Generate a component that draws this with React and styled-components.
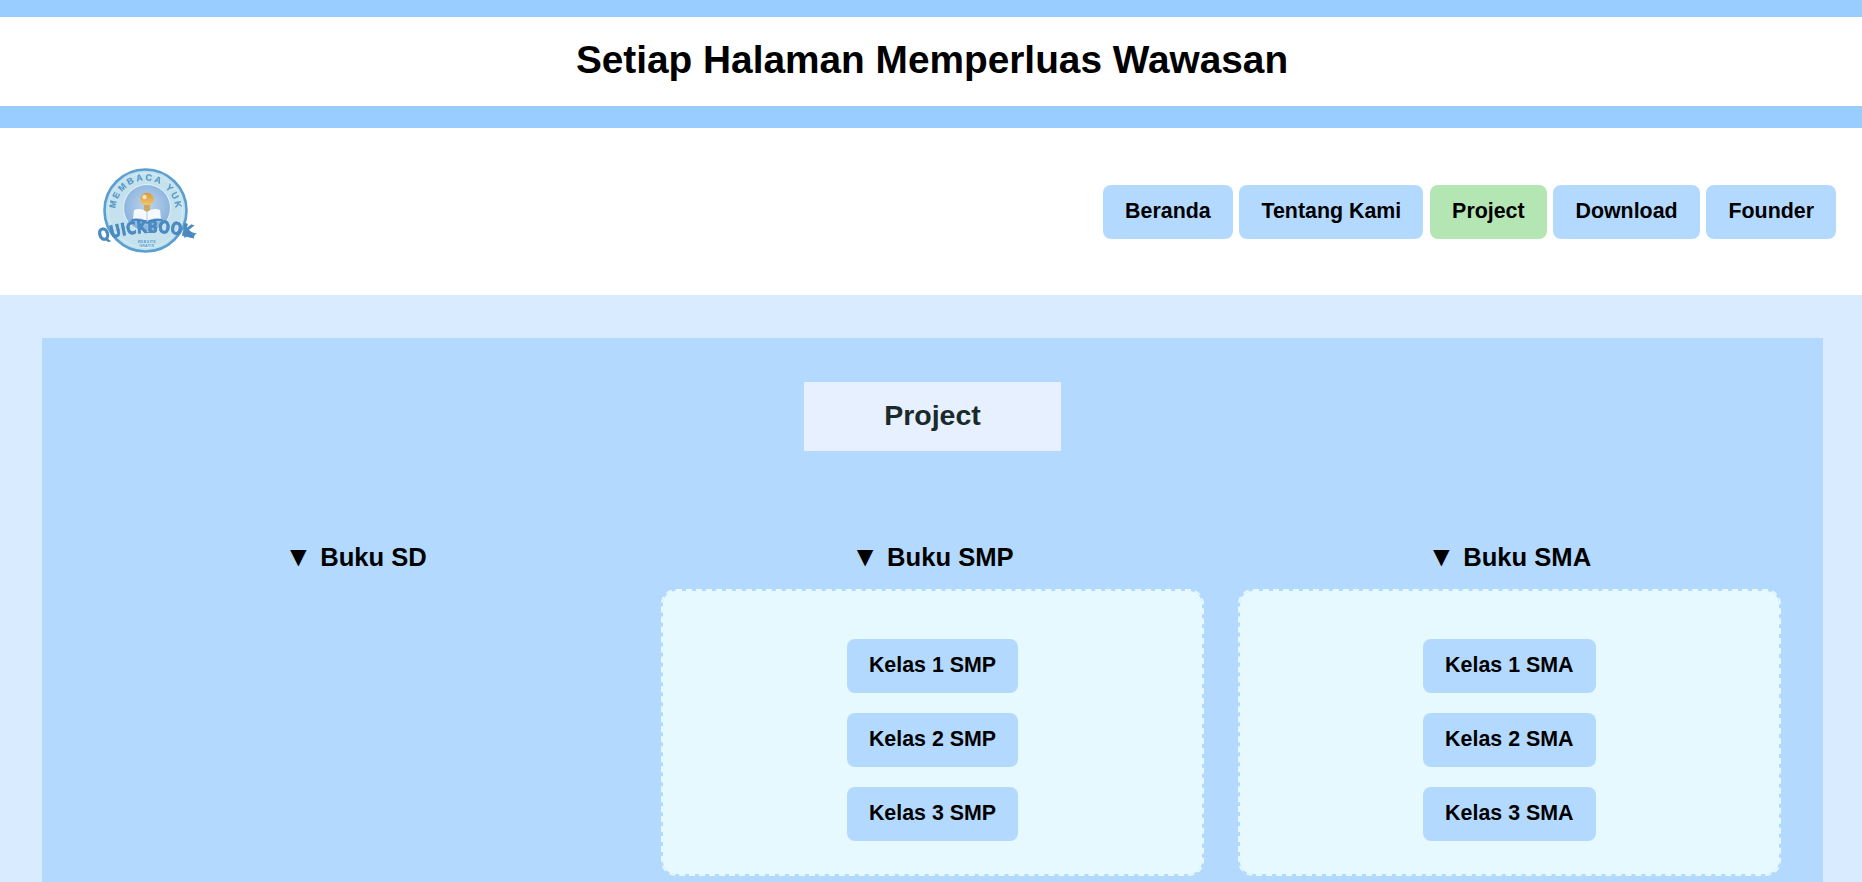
import React from "react";
import styled, { createGlobalStyle } from "styled-components";

const Global = createGlobalStyle`
  html, body { margin: 0; padding: 0; height: 882px; overflow: hidden; }
  body { font-family: "Liberation Sans", Arial, sans-serif; color: #000; background: #d9ebff; }
  * { box-sizing: border-box; }
`;

const Banner = styled.div`
  height: 128px;
  background: #fff;
  border-top: 17px solid #99ccff;
  border-bottom: 22px solid #99ccff;
  display: flex;
  align-items: center;
  justify-content: center;
  padding-left: 2px;
`;
const Title = styled.h1`
  margin: -2px 0 0;
  font-size: 38.8px;
  font-weight: 700;
  line-height: 1;
`;
const Header = styled.header`
  height: 167px;
  background: #fff;
  display: flex;
  align-items: center;
  justify-content: space-between;
  padding: 0 26px 0 97px;
`;
const Logo = styled.svg`
  width: 100px;
  height: 92px;
  display: block;
  overflow: visible;
  filter: blur(0.45px);
`;
const Nav = styled.nav`
  display: flex;
  gap: 6.8px;
`;
const NavButton = styled.a`
  height: 54px;
  padding: 0 22px 1px;
  display: flex;
  align-items: center;
  border-radius: 8px;
  font-size: 21.4px;
  font-weight: 700;
  background: ${(p) => (p.$active ? "#b3e6b3" : "#b3d9ff")};
`;
const Main = styled.main`
  padding: 43px 39px 0 42px;
`;
const Panel = styled.section`
  background: #b3d9ff;
  padding: 44px 42px 60px;
  display: flex;
  flex-direction: column;
  align-items: center;
`;
const PanelTitle = styled.h2`
  margin: 0;
  width: 257px;
  height: 69px;
  padding-bottom: 2px;
  background: #e6f0ff;
  color: #1a2a2a;
  font-size: 28.5px;
  font-weight: 700;
  display: flex;
  align-items: center;
  justify-content: center;
`;
const Columns = styled.div`
  margin-top: 91px;
  width: 100%;
  display: grid;
  grid-template-columns: repeat(3, 1fr);
  column-gap: 33.5px;
`;
const Column = styled.div`
  display: flex;
  flex-direction: column;
  align-items: center;
`;
const ColumnHeading = styled.h3`
  margin: 0;
  height: 30px;
  line-height: 30px;
  font-size: 25.6px;
  font-weight: 700;
  display: flex;
  align-items: center;
  gap: 8px;
`;
const Arrow = styled.span`
  font-size: 28px;
  line-height: 30px;
`;
const ClassBox = styled.div`
  margin-top: 17px;
  width: 100%;
  height: 287px;
  padding-top: 48px;
  background: #e6f9ff;
  background-clip: padding-box;
  border: 2px dashed #e6f9ff;
  border-radius: 15px;
  display: flex;
  flex-direction: column;
  align-items: center;
  gap: 20px;
  visibility: ${(p) => (p.$hidden ? "hidden" : "visible")};
`;
const ClassButton = styled.a`
  height: 54px;
  padding: 0 22px 2px;
  display: flex;
  align-items: center;
  border-radius: 8px;
  font-size: 21.4px;
  font-weight: 700;
  background: #b3d9ff;
`;

const LogoMark = () => (
  <Logo viewBox="0 0 100 92">
    <defs>
      <path id="logoArc" d="M 18.5 44.5 A 30 30 0 0 1 78.5 44.5" fill="none" />
      <path id="logoBanner" d="M 3 76 Q 51 59 99 73" fill="none" />
      <radialGradient id="logoInner" cx="50%" cy="45%" r="55%">
        <stop offset="0%" stopColor="#bcd4ec" />
        <stop offset="100%" stopColor="#88b2dc" />
      </radialGradient>
      <linearGradient id="logoBulb" x1="0" y1="0" x2="0" y2="1">
        <stop offset="0%" stopColor="#d99a3a" />
        <stop offset="100%" stopColor="#f0c878" />
      </linearGradient>
    </defs>
    <circle cx="48.5" cy="44.5" r="41" fill="#c4e2ee" stroke="#5b9fd0" strokeWidth="2.6" />
    <circle cx="48.5" cy="44.5" r="37" fill="none" stroke="#eaf6fb" strokeWidth="0.8" strokeDasharray="1.2 0.8" />
    <circle cx="50" cy="42" r="23.5" fill="url(#logoInner)" stroke="#e4f2f9" strokeWidth="1" />
    <text fontSize="9" fontWeight="700" fill="#5a98c8" stroke="#5a98c8" strokeWidth="0.2" fontFamily="'Liberation Sans', sans-serif">
      <textPath href="#logoArc" textLength="90" lengthAdjust="spacing" startOffset="2%">MEMBACA YUK</textPath>
    </text>
    <circle cx="50" cy="33.5" r="6.8" fill="url(#logoBulb)" />
    <circle cx="47.5" cy="31" r="2.2" fill="#f6e2b4" />
    <path d="M47 39 H53 V47 H47 Z" fill="#caa968" />
    <path d="M37 44 Q44 41 50 46 Q56 41 63 44 L64 53 Q56 51 50 55 Q44 51 36 53 Z" fill="#f5f9fd" />
    <path d="M35 53 Q44 52 50 56 Q56 52 65 53 L66 55 Q56 54 50 58 Q44 54 34 55 Z" fill="#3d86c6" />
    <path d="M50 46 V55" stroke="#9cb9d4" strokeWidth="0.7" />
    <path d="M90 62 Q95 68 100 67 Q96 70 97 73 Q92 69 87 72 Z" fill="#4a8cc2" />
    <text fontSize="17" fontWeight="700" fill="#4a8cc2" stroke="#3f7fb4" strokeWidth="0.55" fontFamily="'DejaVu Sans', sans-serif">
      <textPath href="#logoBanner" textLength="93" lengthAdjust="spacingAndGlyphs">QUICKBOOK</textPath>
    </text>
    <text x="50" y="76.5" textAnchor="middle" fontSize="3.3" fontWeight="700" fill="#5a98c8" letterSpacing="0.5" fontFamily="'Liberation Sans', sans-serif">WEBSITE</text>
    <text x="50" y="80.8" textAnchor="middle" fontSize="3.3" fontWeight="700" fill="#5a98c8" letterSpacing="0.5" fontFamily="'Liberation Sans', sans-serif">GRATIS</text>
  </Logo>
);

const navItems = ["Beranda", "Tentang Kami", "Project", "Download", "Founder"];
const columns = [
  { title: "Buku SD", classes: [], hidden: true },
  { title: "Buku SMP", classes: ["Kelas 1 SMP", "Kelas 2 SMP", "Kelas 3 SMP"] },
  { title: "Buku SMA", classes: ["Kelas 1 SMA", "Kelas 2 SMA", "Kelas 3 SMA"] },
];

export default function App() {
  return (
    <>
      <Global />
      <Banner>
        <Title>Setiap Halaman Memperluas Wawasan</Title>
      </Banner>
      <Header>
        <LogoMark />
        <Nav>
          {navItems.map((item) => (
            <NavButton key={item} $active={item === "Project"}>{item}</NavButton>
          ))}
        </Nav>
      </Header>
      <Main>
        <Panel>
          <PanelTitle>Project</PanelTitle>
          <Columns>
            {columns.map((col) => (
              <Column key={col.title}>
                <ColumnHeading>
                  <Arrow>▼</Arrow>
                  <span>{col.title}</span>
                </ColumnHeading>
                <ClassBox $hidden={col.hidden}>
                  {col.classes.map((c) => (
                    <ClassButton key={c}>{c}</ClassButton>
                  ))}
                </ClassBox>
              </Column>
            ))}
          </Columns>
        </Panel>
      </Main>
    </>
  );
}
